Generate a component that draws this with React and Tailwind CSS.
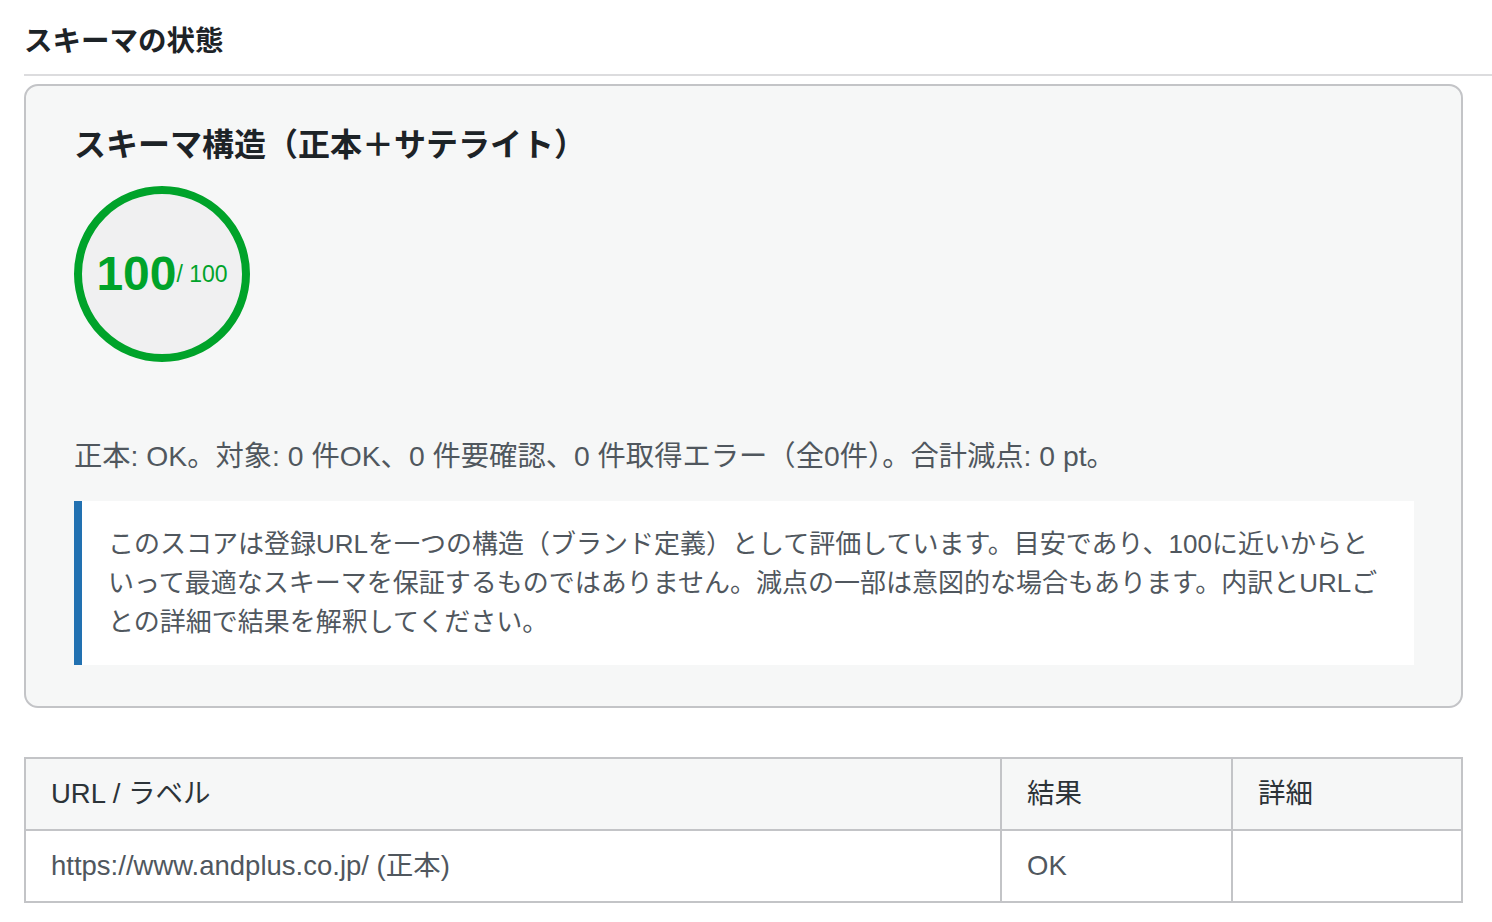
export default function App() {
  const font = { fontFamily: '"Liberation Sans", "Noto Sans CJK JP", sans-serif' };
  return (
    <div className="min-h-screen bg-white pl-[24px] pt-[22px]" style={font}>
      <h2 className="border-b-2 border-[#dcdcde] pb-[14px] text-[28.5px] font-bold leading-[38px] text-[#1d2327]">
        スキーマの状態
      </h2>
      <div className="mr-[29px] mt-[8px] rounded-[14px] border-2 border-[#c3c4c7] bg-[#f6f7f7] pb-[41px] pl-[48px] pr-[47px] pt-[38px]">
        <h3 className="text-[32px] font-bold leading-[42px] text-[#1d2327]">
          スキーマ構造（正本＋サテライト）
        </h3>
        <div className="mt-[20px] flex h-[176px] w-[176px] items-center justify-center rounded-full border-[8px] border-[#00a32a] bg-[#f0f0f1] text-[#00a32a]">
          <span className="text-[48px] font-bold leading-none">100</span>
          <span className="text-[23px] leading-none">/ 100</span>
        </div>
        <p className="mt-[76px] text-[28.3px] leading-[36px] text-[#50575e]">
          正本: OK。対象: 0 件OK、0 件要確認、0 件取得エラー（全0件）。合計減点: 0 pt。
        </p>
        <div className="mt-[27px] border-l-[8px] border-[#2271b1] bg-white pb-[23px] pl-[26px] pr-[24px] pt-[24px] text-[26px] leading-[39px] text-[#50575e]">
          このスコアは登録URLを一つの構造（ブランド定義）として評価しています。目安であり、100に近いからと
          <br />
          いって最適なスキーマを保証するものではありません。減点の一部は意図的な場合もあります。内訳とURLご
          <br />
          との詳細で結果を解釈してください。
        </div>
      </div>
      <table className="mr-[29px] mt-[49px] w-[calc(100%-29px)] border-collapse text-[27.5px] leading-[36px]">
        <thead>
          <tr className="bg-[#f6f7f7] text-[#2c3338]">
            <th className="h-[72px] border-2 border-[#c3c4c7] px-[25px] text-left font-normal">URL / ラベル</th>
            <th className="h-[72px] w-[231px] border-2 border-[#c3c4c7] px-[25px] text-left font-normal">結果</th>
            <th className="h-[72px] w-[230px] border-2 border-[#c3c4c7] px-[25px] text-left font-normal">詳細</th>
          </tr>
        </thead>
        <tbody>
          <tr className="bg-white text-[#50575e]">
            <td className="h-[72px] border-2 border-[#c3c4c7] px-[25px]">https://www.andplus.co.jp/ (正本)</td>
            <td className="h-[72px] border-2 border-[#c3c4c7] px-[25px]">OK</td>
            <td className="h-[72px] border-2 border-[#c3c4c7] px-[25px]"></td>
          </tr>
        </tbody>
      </table>
    </div>
  );
}
